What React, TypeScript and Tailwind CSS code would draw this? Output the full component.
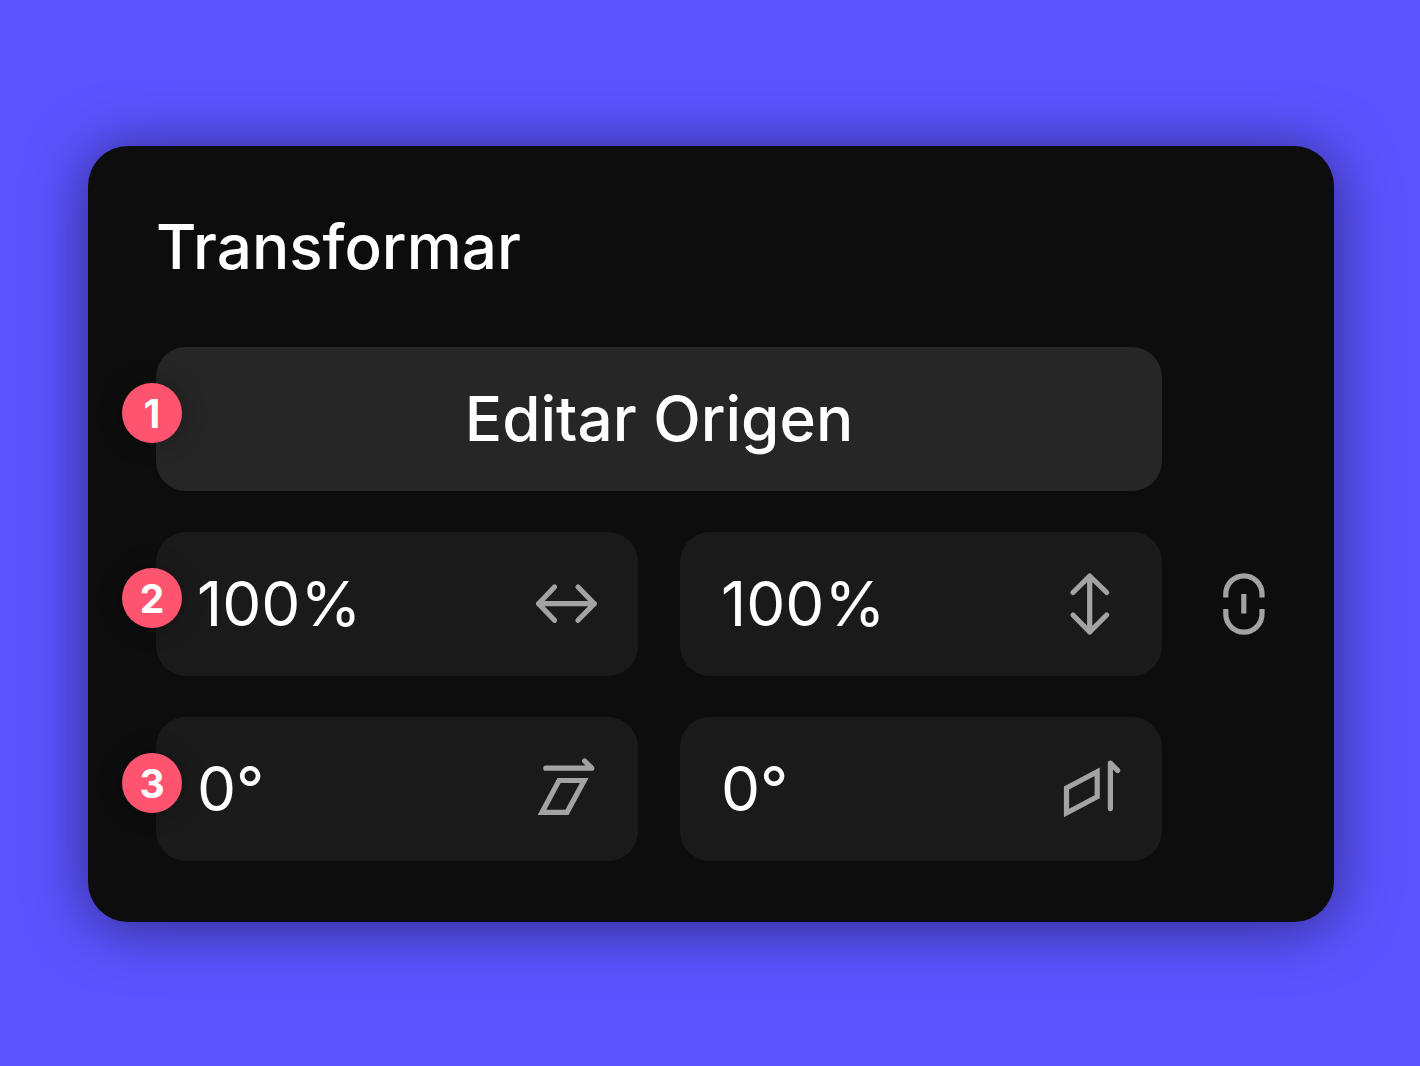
import { useState } from 'react';
import type { ReactNode } from 'react';

function IconBase({ children }: { children: ReactNode }) {
  return (
    <svg
      viewBox="0 0 72 72"
      className="w-18 h-18 shrink-0 text-[#a3a3a3]"
      fill="none"
      stroke="currentColor"
      strokeWidth={5.2}
      aria-hidden="true"
    >
      {children}
    </svg>
  );
}

const icons = {
  scaleX: (
    <IconBase>
      <path d="M24.5 19 8.6 35.7l15.9 16.6M48 19l16.3 16.7L48 52.3M8.6 35.7h55.7" strokeLinecap="round" strokeLinejoin="round" />
    </IconBase>
  ),
  scaleY: (
    <IconBase>
      <path d="M19 24.5 35.7 8l17 16.5M19 47l16.7 17 17-17M35.7 8v56" strokeLinecap="round" strokeLinejoin="round" />
    </IconBase>
  ),
  skewX: (
    <IconBase>
      <path d="M15.8 15.2h46L54.6 8" strokeLinecap="round" strokeLinejoin="round" />
      <path d="M29 27.5h25.2L37 59.3H12z" />
    </IconBase>
  ),
  skewY: (
    <IconBase>
      <path d="M56.4 55.6V10.2l7.2 7.2" strokeLinecap="round" strokeLinejoin="round" />
      <path d="M12.5 35l30.7-16.3v25L12.5 60z" />
    </IconBase>
  ),
  link: (
    <IconBase>
      <path d="M17.8 29.6V26a18.1 18.1 0 0 1 36.2 0v3.6M17.8 41v5A18.1 18.1 0 0 0 54 46v-5M35.8 26v19.5" />
    </IconBase>
  ),
};

const rows = [
  {
    step: 2,
    fields: [
      { id: 'scale-x', label: 'Escala horizontal', icon: icons.scaleX },
      { id: 'scale-y', label: 'Escala vertical', icon: icons.scaleY },
    ],
  },
  {
    step: 3,
    fields: [
      { id: 'skew-x', label: 'Inclinación horizontal', icon: icons.skewX },
      { id: 'skew-y', label: 'Inclinación vertical', icon: icons.skewY },
    ],
  },
];

// Numbered marker that overlaps the left edge of a row
function Badge({ children }: { children: ReactNode }) {
  return (
    <span className="absolute top-9 -left-[34px] w-15 h-15 rounded-full bg-[#ff5470] flex items-center justify-center text-[39px] leading-none font-bold text-white shadow-[0_0_24px_rgba(0,0,0,0.3)]">
      {children}
    </span>
  );
}

export default function App() {
  const [values, setValues] = useState<Record<string, string>>({
    'scale-x': '100%',
    'scale-y': '100%',
    'skew-x': '0°',
    'skew-y': '0°',
  });
  const [linked, setLinked] = useState(true);

  return (
    <main className="min-h-screen bg-[#5b53ff] pt-[146px] pb-36 pl-22 pr-[86px] font-['Inter',sans-serif] text-[62px] leading-[72px] text-white">
      <section className="rounded-[40px] bg-[#0d0d0d] pt-[65px] pb-[61px] pl-[68px] pr-[50px] shadow-[0_4px_60px_rgba(0,0,0,0.5)]">
        <h1 className="mb-16 font-medium">Transformar</h1>

        <div className="grid grid-cols-[minmax(0,1fr)_minmax(0,1fr)_80px] gap-x-[42px] gap-y-[41px]">
          <div className="relative col-span-2">
            <button type="button" className="w-full h-36 rounded-[30px] bg-[#262626] font-medium cursor-pointer">
              Editar Origen
            </button>
            <Badge>1</Badge>
          </div>

          {rows.map((row) => (
            <div key={row.step} className="col-span-3 grid grid-cols-subgrid items-center">
              {row.fields.map((field, idx) => (
                <div key={field.id} className="relative h-36 rounded-[30px] bg-[#1a1a1a] flex items-center pl-[41px] pr-9">
                  <input
                    id={field.id}
                    type="text"
                    value={values[field.id]}
                    onChange={(e) => setValues({ ...values, [field.id]: e.target.value })}
                    className="min-w-0 flex-1 bg-transparent outline-none"
                  />
                  <label htmlFor={field.id} aria-label={field.label}>
                    {field.icon}
                  </label>
                  {idx === 0 && <Badge>{row.step}</Badge>}
                </div>
              ))}
              {row.step === 2 && (
                <button
                  type="button"
                  aria-label="Vincular escala"
                  aria-pressed={linked}
                  onClick={() => setLinked(!linked)}
                  className="flex justify-center cursor-pointer"
                >
                  {icons.link}
                </button>
              )}
            </div>
          ))}
        </div>
      </section>
    </main>
  );
}
